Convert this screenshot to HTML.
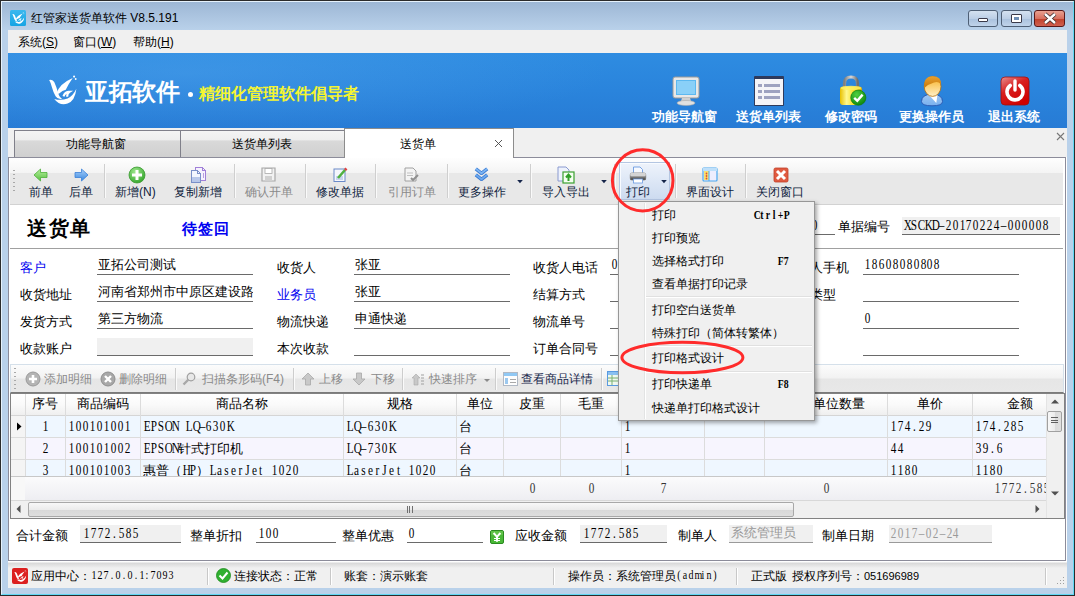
<!DOCTYPE html>
<html><head><meta charset="utf-8">
<style>
*{margin:0;padding:0;box-sizing:border-box}
html,body{width:1075px;height:596px;overflow:hidden;background:#b9d1ea}
body{position:relative;font-family:"Liberation Sans",sans-serif;font-size:12px;color:#000}
.a{position:absolute;white-space:nowrap}
.mono{font-family:"Liberation Mono",monospace}
.m{font-family:"Liberation Mono",monospace;font-size:14px;line-height:16px;transform:scaleX(0.821);transform-origin:0 0}
.s{font-family:"Liberation Serif",serif;font-size:14px;line-height:16px}
.c{display:inline-block;width:6.95px;text-align:center;transform:scaleX(0.8)}
</style></head><body>
<!-- window frame -->
<div class="a" style="left:0;top:0;width:1075px;height:596px;border:1px solid #2b2b2b;background:#b9d1ea"></div>
<div class="a" style="left:1px;top:1px;width:1073px;height:594px;border:1px solid #e6f2fc;border-right-color:#60d8f4;border-bottom-color:#60d8f4"></div>
<!-- title bar gradient -->
<div class="a" style="left:2px;top:2px;width:1071px;height:28px;background:linear-gradient(#9db7d5,#b9d1ea)"></div>
<!-- title icon -->
<svg class="a" style="left:10px;top:10px" width="16" height="16" viewBox="0 0 16 16"><defs><linearGradient id="lg1" x1="0" y1="0" x2="0" y2="1"><stop offset="0" stop-color="#3ab8ee"/><stop offset="1" stop-color="#16a4e4"/></linearGradient></defs><rect x="0" y="0" width="16" height="16" rx="1.5" fill="url(#lg1)"/><path d="M2.4 4.2 Q3.6 3.8 4.6 5 Q5.6 7 6.2 9 Q6.8 11 8 11.6 Q6.2 12 5.2 10.6 Q4.2 9 3.6 7 Q3.1 5.2 2.4 4.2Z" fill="#fff"/><path d="M5.6 9.4 Q7 5.6 12.6 3.4 Q10.6 6 9.6 8 Q8.2 8.2 6.6 9.6Z" fill="#fff"/><path d="M4.6 11.6 Q7 14.4 10.4 13.4 Q13.6 12.4 14.2 7.6 Q12.6 10.6 10.4 11.4 Q7.6 12.4 4.6 11.6Z" fill="#fff"/><path d="M8.6 10.6 Q9.2 8.8 11.2 8.8 Q10.2 9.4 10.2 10.8" fill="none" stroke="#fff" stroke-width="0.9"/><circle cx="13.2" cy="2.8" r="0.45" fill="#fff"/><circle cx="13.9" cy="3.8" r="0.4" fill="#fff"/></svg>
<div class="a" style="left:31px;top:10px;font-size:12px;line-height:16px;color:#000">红管家送货单软件 V8.5.191</div>
<!-- window buttons -->
<div class="a" style="left:968px;top:10px;width:30px;height:17px;border:1px solid #4e5f75;border-radius:3px;background:linear-gradient(#d4e1f0 0%,#bccfe6 50%,#a9c1dd 51%,#c0d3ea 100%)"></div>
<div class="a" style="left:978px;top:18px;width:10px;height:4px;border:1px solid #3a3a4a;background:#fff;border-radius:1px"></div>
<div class="a" style="left:1001px;top:10px;width:31px;height:17px;border:1px solid #4e5f75;border-radius:3px;background:linear-gradient(#d4e1f0 0%,#bccfe6 50%,#a9c1dd 51%,#c0d3ea 100%)"></div>
<div class="a" style="left:1011px;top:14px;width:11px;height:9px;border:1px solid #3a3a4a;background:#fff;border-radius:1px"></div>
<div class="a" style="left:1014px;top:17px;width:5px;height:3px;background:#6f8fb5"></div>
<div class="a" style="left:1034px;top:10px;width:31px;height:17px;border:1px solid #5a1818;border-radius:3px;background:linear-gradient(#e8a090 0%,#d87060 50%,#c0402a 51%,#d06050 100%)"></div>
<svg class="a" style="left:1042px;top:12px" width="16" height="13" viewBox="0 0 16 13"><path d="M3 2 L13 11 M13 2 L3 11" stroke="#3a2a2a" stroke-width="4"/><path d="M3 2 L13 11 M13 2 L3 11" stroke="#fff" stroke-width="2.4"/></svg>

<!-- client area -->
<div class="a" style="left:8px;top:30px;width:1059px;height:558px;background:#f0f0f0"></div>
<!-- menubar -->
<div class="a" style="left:18px;top:33px;line-height:18px;font-size:12px">系统(<u>S</u>)</div>
<div class="a" style="left:73px;top:33px;line-height:18px;font-size:12px">窗口(<u>W</u>)</div>
<div class="a" style="left:133px;top:33px;line-height:18px;font-size:12px">帮助(<u>H</u>)</div>

<!-- banner -->
<div class="a" style="left:8px;top:53px;width:1059px;height:75px;background:#2a88de"></div>

<!-- banner content -->
<div class="a" style="left:8px;top:53px;width:1059px;height:75px;background:radial-gradient(ellipse 420px 60px at 180px 20px,rgba(90,170,240,0.35),rgba(90,170,240,0) 100%),linear-gradient(#2e8ce1,#2a84dc 50%,#277bd5)"></div>
<svg class="a" style="left:48px;top:75px" width="30" height="31" viewBox="1.9 2.2 13 12.2" preserveAspectRatio="none"><path d="M2.4 4.2 Q3.6 3.8 4.6 5 Q5.6 7 6.2 9 Q6.8 11 8 11.6 Q6.2 12 5.2 10.6 Q4.2 9 3.6 7 Q3.1 5.2 2.4 4.2Z" fill="#fff"/><path d="M5.6 9.4 Q7 5.6 12.6 3.4 Q10.6 6 9.6 8 Q8.2 8.2 6.6 9.6Z" fill="#fff"/><path d="M4.6 11.6 Q7 14.4 10.4 13.4 Q13.6 12.4 14.2 7.6 Q12.6 10.6 10.4 11.4 Q7.6 12.4 4.6 11.6Z" fill="#fff"/><path d="M8.6 10.6 Q9.2 8.8 11.2 8.8 Q10.2 9.4 10.2 10.8" fill="none" stroke="#fff" stroke-width="0.9"/><circle cx="13.2" cy="2.8" r="0.45" fill="#fff"/><circle cx="13.9" cy="3.8" r="0.4" fill="#fff"/></svg>
<div class="a" style="left:85px;top:77px;font-size:24px;line-height:30px;color:#fff;font-weight:bold;letter-spacing:-0.5px">亚拓软件</div>
<div class="a" style="left:188px;top:92px;width:5px;height:5px;border-radius:50%;background:#fff"></div>
<div class="a" style="left:199px;top:83px;font-size:16px;line-height:22px;color:#f5f530;font-weight:bold">精细化管理软件倡导者</div>

<!-- banner icons -->
<svg class="a" style="left:672px;top:76px" width="28" height="30" viewBox="0 0 28 30">
<rect x="1" y="1" width="26" height="21" rx="2" fill="#e8e8e8" stroke="#9a9a9a"/>
<rect x="4" y="4" width="20" height="15" fill="#5cb8f0"/><rect x="5" y="5" width="18" height="13" fill="#8ad0f8"/>
<path d="M10 22 L18 22 L19 25 L9 25Z" fill="#d0d0d0"/><ellipse cx="14" cy="27" rx="9" ry="2.5" fill="#e0e0e0" stroke="#aaa" stroke-width="0.6"/>
</svg>
<svg class="a" style="left:753px;top:75px" width="32" height="32" viewBox="0 0 32 32">
<rect x="1" y="1" width="30" height="30" rx="1" fill="#2e3a5c"/>
<rect x="2" y="4" width="28" height="26" fill="#f4f4f8"/>
<rect x="5" y="9" width="4" height="3" fill="#9ea2c0"/><rect x="11" y="9" width="16" height="3" fill="#9ea2c0"/>
<rect x="5" y="15" width="4" height="3" fill="#9ea2c0"/><rect x="11" y="15" width="16" height="3" fill="#9ea2c0"/>
<rect x="5" y="21" width="4" height="3" fill="#9ea2c0"/><rect x="11" y="21" width="16" height="3" fill="#9ea2c0"/>
</svg>
<svg class="a" style="left:839px;top:75px" width="28" height="32" viewBox="0 0 28 32">
<defs><linearGradient id="lkb" x1="0" y1="0" x2="1" y2="0"><stop offset="0" stop-color="#e8c000"/><stop offset="0.3" stop-color="#fff890"/><stop offset="0.6" stop-color="#f8e030"/><stop offset="1" stop-color="#d8a800"/></linearGradient>
<linearGradient id="lks" x1="0" y1="0" x2="1" y2="0"><stop offset="0" stop-color="#808080"/><stop offset="0.5" stop-color="#d8d8d8"/><stop offset="1" stop-color="#707070"/></linearGradient>
<radialGradient id="lkc" cx="0.4" cy="0.3" r="0.7"><stop offset="0" stop-color="#50d040"/><stop offset="1" stop-color="#108a10"/></radialGradient></defs>
<path d="M5.5 13 L5.5 8.5 Q5.5 2 12 2 Q18.5 2 18.5 8.5 L18.5 13" fill="none" stroke="url(#lks)" stroke-width="3.2"/>
<rect x="1" y="11.5" width="22" height="18.5" rx="3" fill="url(#lkb)"/>
<ellipse cx="12" cy="13" rx="10.5" ry="2.2" fill="#fff060" opacity="0.8"/>
<circle cx="19.3" cy="22.7" r="7.6" fill="url(#lkc)" stroke="#0a7a0a" stroke-width="0.6"/>
<path d="M15.2 22.8 L18.3 25.8 L23.6 19.6" fill="none" stroke="#fff" stroke-width="2.4"/>
</svg>
<svg class="a" style="left:919px;top:74px" width="26" height="34" viewBox="0 0 26 34">
<defs><linearGradient id="ubd" x1="0" y1="0" x2="0" y2="1"><stop offset="0" stop-color="#a0c8f4"/><stop offset="1" stop-color="#78b0ee"/></linearGradient>
<linearGradient id="uhd" x1="0" y1="0" x2="0" y2="1"><stop offset="0" stop-color="#f8b020"/><stop offset="1" stop-color="#fff0c8"/></linearGradient>
<linearGradient id="uhr" x1="0" y1="0" x2="0" y2="1"><stop offset="0" stop-color="#e8a030"/><stop offset="1" stop-color="#c87808"/></linearGradient></defs>
<path d="M2.5 27.5 Q2.5 20.5 13 20 Q23.5 20.5 23.5 27.5 Q23.5 31.8 13 31.8 Q2.5 31.8 2.5 27.5Z" fill="url(#ubd)" stroke="#2a58b0" stroke-width="0.9"/>
<path d="M10 21 L18.5 20.8 L17.3 29Z" fill="#fff"/>
<ellipse cx="13.6" cy="12.4" rx="8.4" ry="10" fill="url(#uhd)" stroke="#b07010" stroke-width="0.8"/>
<path d="M5.3 14 Q4.2 2.2 13.6 2.2 Q22.6 2.2 22 10.5 Q19 6.8 15 8.6 Q9.5 10.2 5.3 14Z" fill="url(#uhr)"/>
</svg>
<svg class="a" style="left:1000px;top:76px" width="30" height="30" viewBox="0 0 30 30">
<defs><linearGradient id="pwg" x1="0" y1="0" x2="0.6" y2="1"><stop offset="0" stop-color="#e89090"/><stop offset="0.45" stop-color="#d82020"/><stop offset="1" stop-color="#d00000"/></linearGradient></defs>
<rect x="1" y="1" width="28" height="28" rx="4" fill="url(#pwg)" stroke="#a01010" stroke-width="0.8"/>
<path d="M10.2 9.5 A8 8 0 1 0 19.8 9.5" fill="none" stroke="#fff" stroke-width="3.6" stroke-linecap="round"/>
<path d="M15 5 L15 14" stroke="#fff" stroke-width="3.4" stroke-linecap="round"/>
</svg>
<div class="a" style="left:652px;top:108px;font-size:13px;line-height:17px;color:#fff;font-weight:bold">功能导航窗</div>
<div class="a" style="left:736px;top:108px;font-size:13px;line-height:17px;color:#fff;font-weight:bold">送货单列表</div>
<div class="a" style="left:825px;top:108px;font-size:13px;line-height:17px;color:#fff;font-weight:bold">修改密码</div>
<div class="a" style="left:899px;top:108px;font-size:13px;line-height:17px;color:#fff;font-weight:bold">更换操作员</div>
<div class="a" style="left:988px;top:108px;font-size:13px;line-height:17px;color:#fff;font-weight:bold">退出系统</div>

<!-- tabs -->
<div class="a" style="left:14px;top:130px;width:167px;height:28px;border:1px solid #80808a;border-bottom:none;background:linear-gradient(#f4f4f4 0%,#eeeeee 34%,#d9d9d9 36%,#cfcfcf 100%)"></div>
<div class="a" style="left:180px;top:130px;width:165px;height:28px;border:1px solid #80808a;border-bottom:none;background:linear-gradient(#f4f4f4 0%,#eeeeee 34%,#d9d9d9 36%,#cfcfcf 100%)"></div>
<div class="a" style="left:66px;top:136px;font-size:12px;line-height:16px">功能导航窗</div>
<div class="a" style="left:232px;top:136px;font-size:12px;line-height:16px">送货单列表</div>
<!-- panel -->
<div class="a" style="left:8px;top:157px;width:1058px;height:404px;border:1px solid #8c8c9a;background:#fff"></div>
<div class="a" style="left:344px;top:128px;width:170px;height:31px;border:1px solid #8c8c8c;border-bottom:none;background:#fff"></div>
<div class="a" style="left:400px;top:136px;font-size:12px;line-height:16px">送货单</div>
<svg class="a" style="left:494px;top:139px" width="9" height="9" viewBox="0 0 9 9"><path d="M1 1 L8 8 M8 1 L1 8" stroke="#444" stroke-width="0.9"/></svg>
<svg class="a" style="left:1056px;top:132px" width="9" height="9" viewBox="0 0 9 9"><path d="M1 1 L8 8 M8 1 L1 8" stroke="#777" stroke-width="1.1"/></svg>
<div class="a" style="left:1066px;top:157px;width:1px;height:404px;background:#fff"></div>
<!-- toolbar -->
<div class="a" style="left:10px;top:158px;width:1053px;height:47px;background:linear-gradient(#fefefe 0%,#f4f4f4 32%,#e8e8e8 33%,#e8e8e8 100%);border-bottom:1px solid #d2d2d2"></div>
<div class="a" style="left:13px;top:170px;width:2px;height:24px;background:repeating-linear-gradient(#a8a8a8 0 1.5px,transparent 1.5px 4px)"></div>
<div class="a" style="left:104px;top:164px;width:1px;height:34px;background:#cfcfcf;box-shadow:1px 0 0 #fafafa"></div>
<div class="a" style="left:234px;top:164px;width:1px;height:34px;background:#cfcfcf;box-shadow:1px 0 0 #fafafa"></div>
<div class="a" style="left:305px;top:164px;width:1px;height:34px;background:#cfcfcf;box-shadow:1px 0 0 #fafafa"></div>
<div class="a" style="left:375px;top:164px;width:1px;height:34px;background:#cfcfcf;box-shadow:1px 0 0 #fafafa"></div>
<div class="a" style="left:447px;top:164px;width:1px;height:34px;background:#cfcfcf;box-shadow:1px 0 0 #fafafa"></div>
<div class="a" style="left:530px;top:164px;width:1px;height:34px;background:#cfcfcf;box-shadow:1px 0 0 #fafafa"></div>
<div class="a" style="left:614px;top:164px;width:1px;height:34px;background:#cfcfcf;box-shadow:1px 0 0 #fafafa"></div>
<div class="a" style="left:675px;top:164px;width:1px;height:34px;background:#cfcfcf;box-shadow:1px 0 0 #fafafa"></div>
<div class="a" style="left:745px;top:164px;width:1px;height:34px;background:#cfcfcf;box-shadow:1px 0 0 #fafafa"></div>
<div class="a" style="left:619px;top:162px;width:51px;height:38px;border:1px solid #b4c6e2;box-shadow:inset 1px 1px 0 #f8fbff;background:linear-gradient(#eef3fb,#dde7f6 50%,#cddbf0)"></div>
<div class="a" style="left:29px;top:184px;font-size:12px;line-height:16px;color:#0e1c3c">前单</div>
<div class="a" style="left:69px;top:184px;font-size:12px;line-height:16px;color:#0e1c3c">后单</div>
<div class="a" style="left:115px;top:184px;font-size:12px;line-height:16px;color:#0e1c3c">新增(N)</div>
<div class="a" style="left:174px;top:184px;font-size:12px;line-height:16px;color:#0e1c3c">复制新增</div>
<div class="a" style="left:245px;top:184px;font-size:12px;line-height:16px;color:#8a8a8a">确认开单</div>
<div class="a" style="left:316px;top:184px;font-size:12px;line-height:16px;color:#0e1c3c">修改单据</div>
<div class="a" style="left:388px;top:184px;font-size:12px;line-height:16px;color:#8a8a8a">引用订单</div>
<div class="a" style="left:458px;top:184px;font-size:12px;line-height:16px;color:#0e1c3c">更多操作</div>
<div class="a" style="left:542px;top:184px;font-size:12px;line-height:16px;color:#0e1c3c">导入导出</div>
<div class="a" style="left:626px;top:184px;font-size:12px;line-height:16px;color:#0e1c3c">打印</div>
<div class="a" style="left:686px;top:184px;font-size:12px;line-height:16px;color:#0e1c3c">界面设计</div>
<div class="a" style="left:756px;top:184px;font-size:12px;line-height:16px;color:#0e1c3c">关闭窗口</div>
<svg class="a" style="left:516.5px;top:180px" width="6" height="4" viewBox="0 0 6 4"><path d="M0.2 0 L5.8 0 L3 3.2Z" fill="#15254a"/></svg>
<svg class="a" style="left:600.5px;top:180px" width="6" height="4" viewBox="0 0 6 4"><path d="M0.2 0 L5.8 0 L3 3.2Z" fill="#15254a"/></svg>
<svg class="a" style="left:660.5px;top:180px" width="6" height="4" viewBox="0 0 6 4"><path d="M0.2 0 L5.8 0 L3 3.2Z" fill="#15254a"/></svg>

<!-- toolbar icons -->
<svg class="a" style="left:33px;top:168px" width="15" height="14" viewBox="0 0 15 14"><defs><linearGradient id="gg" x1="0" y1="0" x2="0" y2="1"><stop offset="0" stop-color="#b8f0a0"/><stop offset="1" stop-color="#58c040"/></linearGradient></defs><path d="M1 7 L7.5 1 L7.5 4.5 L14 4.5 L14 9.5 L7.5 9.5 L7.5 13Z" fill="url(#gg)" stroke="#4cb038" stroke-width="0.8"/></svg>
<svg class="a" style="left:74px;top:168px" width="15" height="14" viewBox="0 0 15 14"><defs><linearGradient id="bg" x1="0" y1="0" x2="0" y2="1"><stop offset="0" stop-color="#a8d0fa"/><stop offset="1" stop-color="#3a88e0"/></linearGradient></defs><path d="M14 7 L7.5 1 L7.5 4.5 L1 4.5 L1 9.5 L7.5 9.5 L7.5 13Z" fill="url(#bg)" stroke="#3a80d8" stroke-width="0.8"/></svg>
<svg class="a" style="left:128px;top:166px" width="18" height="18" viewBox="0 0 18 18"><defs><radialGradient id="gc" cx="0.4" cy="0.3" r="0.7"><stop offset="0" stop-color="#a0e890"/><stop offset="1" stop-color="#38a830"/></radialGradient></defs><circle cx="9" cy="9" r="8" fill="url(#gc)" stroke="#3a9a30" stroke-width="0.8"/><path d="M9 4 L9 14 M4 9 L14 9" stroke="#fff" stroke-width="3"/></svg>
<svg class="a" style="left:190px;top:167px" width="16" height="16" viewBox="0 0 16 16" shape-rendering="crispEdges"><path d="M5.5 0.5 H12.5 L15.5 3.5 V13.5 H5.5Z" fill="#f6f2fe" stroke="#a080d8"/><path d="M12.5 0.5 V3.5 H15.5" fill="none" stroke="#a080d8"/><path d="M13 6 V11" stroke="#b8a0e0"/><path d="M1.5 3.5 H7.5 L10.5 6.5 V15.5 H1.5Z" fill="#f2f6fe" stroke="#7a90c8"/><path d="M7.5 3.5 V6.5 H10.5" fill="none" stroke="#7a90c8"/><rect x="2" y="10" width="8" height="5" fill="#b8c8ea"/></svg>
<svg class="a" style="left:261px;top:167px" width="15" height="15" viewBox="0 0 15 15"><path d="M1 1 L14 1 L14 14 L1 14Z" fill="#f2f2f2" stroke="#a8a8a8" stroke-width="1.2"/><rect x="4" y="1.5" width="7" height="5" fill="#fff" stroke="#a8a8a8" stroke-width="0.8"/><rect x="4" y="9" width="7" height="5" fill="#d0d0d0"/></svg>
<svg class="a" style="left:333px;top:167px" width="15" height="15" viewBox="0 0 15 15"><rect x="1" y="2" width="11" height="12.5" fill="#f4f6fc" stroke="#6a8ac8" stroke-width="1"/><rect x="3" y="9" width="7" height="4" fill="#c8d4ee"/><path d="M5 11 L12 3" stroke="#50b040" stroke-width="2.6"/><path d="M12 3 L13.5 1.5" stroke="#e04040" stroke-width="2.6"/></svg>
<svg class="a" style="left:404px;top:167px" width="15" height="15" viewBox="0 0 15 15"><path d="M1 1 L9 1 L12 4 L12 14 L1 14Z" fill="#f4f4f4" stroke="#a0a0a0" stroke-width="1"/><path d="M3 6 L9 6 M3 8.5 L9 8.5" stroke="#c0c0c0"/><path d="M7 11 L9 13 L14 8" fill="none" stroke="#909090" stroke-width="2"/></svg>
<svg class="a" style="left:474px;top:167px" width="15" height="15" viewBox="0 0 15 15"><path d="M1.8 1.8 L7.5 6.3 L13.2 1.8" fill="none" stroke="#3a78d0" stroke-width="3.4" stroke-linejoin="round"/><path d="M1.8 1.8 L7.5 6.3 L13.2 1.8" fill="none" stroke="#7ab4f4" stroke-width="1.8"/><path d="M1.8 7.8 L7.5 12.3 L13.2 7.8" fill="none" stroke="#3a78d0" stroke-width="3.4" stroke-linejoin="round"/><path d="M1.8 7.8 L7.5 12.3 L13.2 7.8" fill="none" stroke="#6aa8ee" stroke-width="1.8"/></svg>
<svg class="a" style="left:557px;top:166px" width="18" height="18" viewBox="0 0 18 18"><path d="M1 1 L9 1 L12 4 L12 15 L1 15Z" fill="#eef2fc" stroke="#8a9ad0" stroke-width="1"/><rect x="6" y="6" width="11" height="11" fill="#f4fff0" stroke="#3aa030" stroke-width="1.2"/><path d="M11.5 15 L11.5 10 M9 11.5 L11.5 8.5 L14 11.5" fill="none" stroke="#30a028" stroke-width="2"/></svg>
<svg class="a" style="left:629px;top:166px" width="18" height="18" viewBox="0 0 18 18"><path d="M4.5 1 L11 1 L13.5 3.5 L13.5 8 L4.5 8Z" fill="#f6f9ff" stroke="#6a9ae0" stroke-width="0.9"/><rect x="0.8" y="6.5" width="16.4" height="8" rx="2.5" fill="#8c8c8c"/><rect x="1.2" y="6.8" width="15.6" height="3.5" rx="1.5" fill="#d4d4d4"/><rect x="1.5" y="11.5" width="15" height="2.5" fill="#5a5a5a"/><rect x="4.5" y="13" width="9" height="4" fill="#fff" stroke="#6a9ae0" stroke-width="0.8"/></svg>
<svg class="a" style="left:702px;top:167px" width="16" height="15" viewBox="0 0 16 15"><rect x="1" y="1" width="14" height="13" rx="1" fill="#eeeefe" stroke="#4aa8f0" stroke-width="1.2"/><rect x="2" y="4" width="5" height="9" fill="#f8e070"/><rect x="1" y="1" width="14" height="3" fill="#bfe0fa"/><circle cx="4.5" cy="6.5" r="0.9" fill="#e05030"/><circle cx="4.5" cy="9" r="0.9" fill="#e05030"/><circle cx="4.5" cy="11.5" r="0.9" fill="#e05030"/><path d="M7 4 L7 14" stroke="#4aa8f0"/></svg>
<svg class="a" style="left:773px;top:167px" width="16" height="16" viewBox="0 0 16 16"><rect x="1" y="1" width="14" height="14" rx="1.5" fill="#e05a40" stroke="#c04028" stroke-width="0.8"/><path d="M4 4 L12 12 M12 4 L4 12" stroke="#fff" stroke-width="3"/></svg>

<!-- header -->
<div class="a" style="left:27px;top:215px;font-size:20px;line-height:26px;font-weight:bold;color:#000;letter-spacing:1.5px">送货单</div>
<div class="a" style="left:182px;top:219px;font-size:15px;line-height:20px;font-weight:bold;color:#0000f0;letter-spacing:1px">待签回</div>
<div class="a" style="left:745px;top:234px;width:90px;height:1px;background:#6a6a6a"></div>
<div class="a s" style="left:811.0px;top:218px;color:#000;"><span class="c">0</span></div>
<div class="a" style="left:838.0px;top:218px;font-size:13px;line-height:17px;color:#000;">单据编号</div>
<div class="a" style="left:902px;top:217px;width:158px;height:18px;background:#f0f0f0;border-bottom:1px solid #6a6a6a"></div>
<div class="a s" style="left:903.0px;top:218px;color:#000;"><span class="c">X</span><span class="c">S</span><span class="c">C</span><span class="c">K</span><span class="c">D</span><span class="c">&#8211;</span><span class="c">2</span><span class="c">0</span><span class="c">1</span><span class="c">7</span><span class="c">0</span><span class="c">2</span><span class="c">2</span><span class="c">4</span><span class="c">&#8211;</span><span class="c">0</span><span class="c">0</span><span class="c">0</span><span class="c">0</span><span class="c">0</span><span class="c">8</span></div>
<div class="a" style="left:10px;top:248px;width:1053px;height:1px;background:#a0a0a0"></div>
<div class="a" style="left:20px;top:259px;font-size:13px;line-height:17px;color:#0000f0">客户</div>
<div class="a" style="left:97px;top:274px;width:156px;height:1px;background:#6a6a6a"></div>
<div class="a" style="left:97px;top:254px;width:156px;height:20px;overflow:hidden"><div class="a" style="left:-97px;top:-254px;width:1075px;height:596px"><div class="a" style="left:98.0px;top:256px;font-size:13px;line-height:17px;color:#000;">亚拓公司测试</div></div></div>
<div class="a" style="left:277px;top:259px;font-size:13px;line-height:17px;color:#000">收货人</div>
<div class="a" style="left:354px;top:274px;width:156px;height:1px;background:#6a6a6a"></div>
<div class="a" style="left:354px;top:254px;width:156px;height:20px;overflow:hidden"><div class="a" style="left:-354px;top:-254px;width:1075px;height:596px"><div class="a" style="left:355.0px;top:256px;font-size:13px;line-height:17px;color:#000;">张亚</div></div></div>
<div class="a" style="left:533px;top:259px;font-size:13px;line-height:17px;color:#000">收货人电话</div>
<div class="a" style="left:610px;top:274px;width:160px;height:1px;background:#6a6a6a"></div>
<div class="a" style="left:610px;top:254px;width:160px;height:20px;overflow:hidden"><div class="a" style="left:-610px;top:-254px;width:1075px;height:596px"><div class="a s" style="left:611.0px;top:257px;color:#000;"><span class="c">0</span><span class="c">3</span><span class="c">7</span><span class="c">1</span><span class="c">&#8211;</span><span class="c">6</span><span class="c">6</span><span class="c">6</span><span class="c">6</span><span class="c">8</span><span class="c">8</span><span class="c">8</span><span class="c">8</span></div></div></div>
<div class="a" style="left:784px;top:259px;font-size:13px;line-height:17px;color:#000">收货人手机</div>
<div class="a" style="left:863px;top:274px;width:156px;height:1px;background:#6a6a6a"></div>
<div class="a" style="left:863px;top:254px;width:156px;height:20px;overflow:hidden"><div class="a" style="left:-863px;top:-254px;width:1075px;height:596px"><div class="a s" style="left:864.0px;top:257px;color:#000;"><span class="c">1</span><span class="c">8</span><span class="c">6</span><span class="c">0</span><span class="c">8</span><span class="c">0</span><span class="c">8</span><span class="c">0</span><span class="c">8</span><span class="c">0</span><span class="c">8</span></div></div></div>
<div class="a" style="left:20px;top:286px;font-size:13px;line-height:17px;color:#000">收货地址</div>
<div class="a" style="left:97px;top:301px;width:156px;height:1px;background:#6a6a6a"></div>
<div class="a" style="left:97px;top:281px;width:156px;height:20px;overflow:hidden"><div class="a" style="left:-97px;top:-281px;width:1075px;height:596px"><div class="a" style="left:98.0px;top:283px;font-size:13px;line-height:17px;color:#000;">河南省郑州市中原区建设路</div></div></div>
<div class="a" style="left:277px;top:286px;font-size:13px;line-height:17px;color:#0000f0">业务员</div>
<div class="a" style="left:354px;top:301px;width:156px;height:1px;background:#6a6a6a"></div>
<div class="a" style="left:354px;top:281px;width:156px;height:20px;overflow:hidden"><div class="a" style="left:-354px;top:-281px;width:1075px;height:596px"><div class="a" style="left:355.0px;top:283px;font-size:13px;line-height:17px;color:#000;">张亚</div></div></div>
<div class="a" style="left:533px;top:286px;font-size:13px;line-height:17px;color:#000">结算方式</div>
<div class="a" style="left:610px;top:301px;width:160px;height:1px;background:#6a6a6a"></div>
<div class="a" style="left:784px;top:286px;font-size:13px;line-height:17px;color:#000">收款类型</div>
<div class="a" style="left:863px;top:301px;width:156px;height:1px;background:#6a6a6a"></div>
<div class="a" style="left:20px;top:313px;font-size:13px;line-height:17px;color:#000">发货方式</div>
<div class="a" style="left:97px;top:328px;width:156px;height:1px;background:#6a6a6a"></div>
<div class="a" style="left:97px;top:308px;width:156px;height:20px;overflow:hidden"><div class="a" style="left:-97px;top:-308px;width:1075px;height:596px"><div class="a" style="left:98.0px;top:310px;font-size:13px;line-height:17px;color:#000;">第三方物流</div></div></div>
<div class="a" style="left:277px;top:313px;font-size:13px;line-height:17px;color:#000">物流快递</div>
<div class="a" style="left:354px;top:328px;width:156px;height:1px;background:#6a6a6a"></div>
<div class="a" style="left:354px;top:308px;width:156px;height:20px;overflow:hidden"><div class="a" style="left:-354px;top:-308px;width:1075px;height:596px"><div class="a" style="left:355.0px;top:310px;font-size:13px;line-height:17px;color:#000;">申通快递</div></div></div>
<div class="a" style="left:533px;top:313px;font-size:13px;line-height:17px;color:#000">物流单号</div>
<div class="a" style="left:610px;top:328px;width:160px;height:1px;background:#6a6a6a"></div>
<div class="a" style="left:784px;top:313px;font-size:13px;line-height:17px;color:#000">运费</div>
<div class="a" style="left:863px;top:328px;width:156px;height:1px;background:#6a6a6a"></div>
<div class="a" style="left:863px;top:308px;width:156px;height:20px;overflow:hidden"><div class="a" style="left:-863px;top:-308px;width:1075px;height:596px"><div class="a s" style="left:864.0px;top:311px;color:#000;"><span class="c">0</span></div></div></div>
<div class="a" style="left:20px;top:340px;font-size:13px;line-height:17px;color:#000">收款账户</div>
<div class="a" style="left:97px;top:338px;width:156px;height:18px;background:#f0f0f0;border-bottom:1px solid #6a6a6a"></div>
<div class="a" style="left:277px;top:340px;font-size:13px;line-height:17px;color:#000">本次收款</div>
<div class="a" style="left:354px;top:355px;width:156px;height:1px;background:#6a6a6a"></div>
<div class="a" style="left:533px;top:340px;font-size:13px;line-height:17px;color:#000">订单合同号</div>
<div class="a" style="left:610px;top:355px;width:160px;height:1px;background:#6a6a6a"></div>
<div class="a" style="left:784px;top:340px;font-size:13px;line-height:17px;color:#000">备注</div>
<div class="a" style="left:863px;top:355px;width:156px;height:1px;background:#6a6a6a"></div>
<!-- detail toolbar -->
<div class="a" style="left:10px;top:364px;width:1054px;height:29px;border:1px solid #d5e0ea;border-bottom:1px solid #7a7a7a;background:linear-gradient(#fcfcfc 0%,#f2f2f2 48%,#e6e6e6 52%,#e8e8e8 100%)"></div>
<div class="a" style="left:14px;top:368px;width:2px;height:22px;background:repeating-linear-gradient(#a8a8a8 0 1.5px,transparent 1.5px 4px)"></div>
<svg class="a" style="left:25px;top:371px" width="16" height="16" viewBox="0 0 16 16"><circle cx="8" cy="8" r="7" fill="#b4b4b4" stroke="#9a9a9a"/><path d="M8 4 L8 12 M4 8 L12 8" stroke="#fff" stroke-width="2.6"/></svg>
<div class="a" style="left:44px;top:371px;font-size:12px;line-height:16px;color:#8a8a8a">添加明细</div>
<svg class="a" style="left:100px;top:371px" width="16" height="16" viewBox="0 0 16 16"><circle cx="8" cy="8" r="7" fill="#a8a8a8" stroke="#8e8e8e"/><path d="M5 5 L11 11 M11 5 L5 11" stroke="#fff" stroke-width="2.4"/></svg>
<div class="a" style="left:119px;top:371px;font-size:12px;line-height:16px;color:#8a8a8a">删除明细</div>
<svg class="a" style="left:182px;top:372px" width="14" height="14" viewBox="0 0 14 14"><circle cx="9" cy="5" r="3.8" fill="#e8e8e8" stroke="#a0a0a0" stroke-width="1.2"/><path d="M6.5 7.5 L1.5 12.5" stroke="#a8a8a8" stroke-width="2.4"/></svg>
<div class="a" style="left:202px;top:371px;font-size:12px;line-height:16px;color:#8a8a8a">扫描条形码(F4)</div>
<svg class="a" style="left:301px;top:372px" width="14" height="14" viewBox="0 0 14 14"><path d="M7 1 L13 7 L9.5 7 L9.5 13 L4.5 13 L4.5 7 L1 7Z" fill="#c8c8c8" stroke="#a8a8a8" stroke-width="0.8"/></svg>
<div class="a" style="left:319px;top:371px;font-size:12px;line-height:16px;color:#8a8a8a">上移</div>
<svg class="a" style="left:352px;top:372px" width="14" height="14" viewBox="0 0 14 14"><path d="M7 13 L13 7 L9.5 7 L9.5 1 L4.5 1 L4.5 7 L1 7Z" fill="#c8c8c8" stroke="#a8a8a8" stroke-width="0.8"/></svg>
<div class="a" style="left:371px;top:371px;font-size:12px;line-height:16px;color:#8a8a8a">下移</div>
<svg class="a" style="left:411px;top:372px" width="14" height="14" viewBox="0 0 14 14"><path d="M5 2 L9 6 L7 6 L7 13 L3 13 L3 6 L1 6Z" fill="#c8c8c8" stroke="#a8a8a8" stroke-width="0.6"/><path d="M10 3 L13 3 M10 6 L13 6 M10 9 L13 9 M10 12 L13 12" stroke="#a0a0a0" stroke-width="1.2"/></svg>
<div class="a" style="left:429px;top:371px;font-size:12px;line-height:16px;color:#8a8a8a">快速排序</div>
<div class="a" style="left:484px;top:379px;width:0;height:0;border-left:3px solid transparent;border-right:3px solid transparent;border-top:3px solid #8a8a8a"></div>
<svg class="a" style="left:503px;top:372px" width="15" height="14" viewBox="0 0 15 14" shape-rendering="crispEdges"><rect x="0.5" y="0.5" width="14" height="13" fill="#fdfdfd" stroke="#b0b8c4"/><rect x="1" y="1" width="13" height="3" fill="#90c8f4"/><rect x="2" y="6" width="3" height="6" fill="#9cc8ee"/><path d="M7 7.5 H13 M7 10.5 H13" stroke="#a8a8a8"/></svg>
<div class="a" style="left:521px;top:371px;font-size:12px;line-height:16px;color:#15254a">查看商品详情</div>
<svg class="a" style="left:607px;top:371px" width="14" height="15" viewBox="0 0 14 15"><rect x="0.5" y="0.5" width="14" height="14" fill="#f0f8f0" stroke="#5a9ae0"/><rect x="1" y="1" width="13" height="3" fill="#8ac0f0"/><path d="M1 7 L14 7 M1 10 L14 10 M5 4 L5 14" stroke="#7ab070"/></svg>
<div class="a" style="left:175px;top:368px;width:1px;height:22px;background:#cdcdcd;box-shadow:1px 0 0 #fafafa"></div>
<div class="a" style="left:293px;top:368px;width:1px;height:22px;background:#cdcdcd;box-shadow:1px 0 0 #fafafa"></div>
<div class="a" style="left:402px;top:368px;width:1px;height:22px;background:#cdcdcd;box-shadow:1px 0 0 #fafafa"></div>
<div class="a" style="left:495px;top:368px;width:1px;height:22px;background:#cdcdcd;box-shadow:1px 0 0 #fafafa"></div>
<div class="a" style="left:601px;top:368px;width:1px;height:22px;background:#cdcdcd;box-shadow:1px 0 0 #fafafa"></div>
<!-- grid -->
<div class="a" style="left:10px;top:393px;width:1055px;height:126px;border:1px solid #828282;background:#fff"></div>
<div class="a" style="left:11px;top:394px;width:1035px;height:22px;background:linear-gradient(#ffffff 0%,#fafafa 50%,#efefef 100%);border-bottom:1px solid #d5d5d5"></div>
<div class="a" style="left:25px;top:394px;width:1px;height:82px;background:#dcdcdc"></div>
<div class="a" style="left:25px;top:395px;width:40px;text-align:center;font-size:13px;line-height:17px">序号</div>
<div class="a" style="left:65px;top:394px;width:1px;height:82px;background:#dcdcdc"></div>
<div class="a" style="left:65px;top:395px;width:75px;text-align:center;font-size:13px;line-height:17px">商品编码</div>
<div class="a" style="left:140px;top:394px;width:1px;height:82px;background:#dcdcdc"></div>
<div class="a" style="left:140px;top:395px;width:203px;text-align:center;font-size:13px;line-height:17px">商品名称</div>
<div class="a" style="left:343px;top:394px;width:1px;height:82px;background:#dcdcdc"></div>
<div class="a" style="left:343px;top:395px;width:113px;text-align:center;font-size:13px;line-height:17px">规格</div>
<div class="a" style="left:456px;top:394px;width:1px;height:82px;background:#dcdcdc"></div>
<div class="a" style="left:456px;top:395px;width:47px;text-align:center;font-size:13px;line-height:17px">单位</div>
<div class="a" style="left:503px;top:394px;width:1px;height:82px;background:#dcdcdc"></div>
<div class="a" style="left:503px;top:395px;width:57px;text-align:center;font-size:13px;line-height:17px">皮重</div>
<div class="a" style="left:560px;top:394px;width:1px;height:82px;background:#dcdcdc"></div>
<div class="a" style="left:560px;top:395px;width:61px;text-align:center;font-size:13px;line-height:17px">毛重</div>
<div class="a" style="left:621px;top:394px;width:1px;height:82px;background:#dcdcdc"></div>
<div class="a" style="left:621px;top:395px;width:83px;text-align:center;font-size:13px;line-height:17px">数量</div>
<div class="a" style="left:704px;top:394px;width:1px;height:82px;background:#dcdcdc"></div>
<div class="a" style="left:704px;top:395px;width:60px;text-align:center;font-size:13px;line-height:17px">辅助数量</div>
<div class="a" style="left:764px;top:394px;width:1px;height:82px;background:#dcdcdc"></div>
<div class="a" style="left:764px;top:395px;width:123px;text-align:center;font-size:13px;line-height:17px">基本单位数量</div>
<div class="a" style="left:887px;top:394px;width:1px;height:82px;background:#dcdcdc"></div>
<div class="a" style="left:887px;top:395px;width:85px;text-align:center;font-size:13px;line-height:17px">单价</div>
<div class="a" style="left:972px;top:394px;width:1px;height:82px;background:#dcdcdc"></div>
<div class="a" style="left:972px;top:395px;width:95px;text-align:center;font-size:13px;line-height:17px">金额</div>
<div class="a" style="left:11px;top:416px;width:14px;height:22px;background:#f4f4f4"></div>
<div class="a" style="left:26px;top:416px;width:1020px;height:22px;background:#eff7ff"></div>
<div class="a" style="left:11px;top:437px;width:1035px;height:1px;background:#dcdcdc"></div>
<div class="a" style="left:26px;top:416px;width:39px;height:21px;overflow:hidden"><div class="a" style="left:-26px;top:-416px;width:1075px;height:596px"><div class="a s" style="left:41.5px;top:419px;color:#000;"><span class="c">1</span></div></div></div>
<div class="a" style="left:66px;top:416px;width:74px;height:21px;overflow:hidden"><div class="a" style="left:-66px;top:-416px;width:1075px;height:596px"><div class="a s" style="left:68.0px;top:419px;color:#000;"><span class="c">1</span><span class="c">0</span><span class="c">0</span><span class="c">1</span><span class="c">0</span><span class="c">1</span><span class="c">0</span><span class="c">0</span><span class="c">1</span></div></div></div>
<div class="a" style="left:141px;top:416px;width:202px;height:21px;overflow:hidden"><div class="a" style="left:-141px;top:-416px;width:1075px;height:596px"><div class="a s" style="left:143.0px;top:419px;color:#000;"><span class="c">E</span><span class="c">P</span><span class="c">S</span><span class="c">O</span><span class="c">N</span><span class="c">&nbsp;</span><span class="c">L</span><span class="c">Q</span><span class="c">&#8211;</span><span class="c">6</span><span class="c">3</span><span class="c">0</span><span class="c">K</span></div></div></div>
<div class="a" style="left:344px;top:416px;width:112px;height:21px;overflow:hidden"><div class="a" style="left:-344px;top:-416px;width:1075px;height:596px"><div class="a s" style="left:346.0px;top:419px;color:#000;"><span class="c">L</span><span class="c">Q</span><span class="c">&#8211;</span><span class="c">6</span><span class="c">3</span><span class="c">0</span><span class="c">K</span></div></div></div>
<div class="a" style="left:457px;top:416px;width:46px;height:21px;overflow:hidden"><div class="a" style="left:-457px;top:-416px;width:1075px;height:596px"><div class="a" style="left:459.0px;top:418px;font-size:13px;line-height:17px;color:#000;">台</div></div></div>
<div class="a" style="left:622px;top:416px;width:82px;height:21px;overflow:hidden"><div class="a" style="left:-622px;top:-416px;width:1075px;height:596px"><div class="a s" style="left:624.0px;top:419px;color:#000;"><span class="c">1</span></div></div></div>
<div class="a" style="left:888px;top:416px;width:84px;height:21px;overflow:hidden"><div class="a" style="left:-888px;top:-416px;width:1075px;height:596px"><div class="a s" style="left:890.0px;top:419px;color:#000;"><span class="c">1</span><span class="c">7</span><span class="c">4</span><span class="c">.</span><span class="c">2</span><span class="c">9</span></div></div></div>
<div class="a" style="left:973px;top:416px;width:73px;height:21px;overflow:hidden"><div class="a" style="left:-973px;top:-416px;width:1075px;height:596px"><div class="a s" style="left:975.0px;top:419px;color:#000;"><span class="c">1</span><span class="c">7</span><span class="c">4</span><span class="c">.</span><span class="c">2</span><span class="c">8</span><span class="c">5</span></div></div></div>
<div class="a" style="left:11px;top:438px;width:14px;height:22px;background:#f4f4f4"></div>
<div class="a" style="left:26px;top:438px;width:1020px;height:22px;background:#f7f5fe"></div>
<div class="a" style="left:11px;top:459px;width:1035px;height:1px;background:#dcdcdc"></div>
<div class="a" style="left:26px;top:438px;width:39px;height:21px;overflow:hidden"><div class="a" style="left:-26px;top:-438px;width:1075px;height:596px"><div class="a s" style="left:41.5px;top:441px;color:#000;"><span class="c">2</span></div></div></div>
<div class="a" style="left:66px;top:438px;width:74px;height:21px;overflow:hidden"><div class="a" style="left:-66px;top:-438px;width:1075px;height:596px"><div class="a s" style="left:68.0px;top:441px;color:#000;"><span class="c">1</span><span class="c">0</span><span class="c">0</span><span class="c">1</span><span class="c">0</span><span class="c">1</span><span class="c">0</span><span class="c">0</span><span class="c">2</span></div></div></div>
<div class="a" style="left:141px;top:438px;width:202px;height:21px;overflow:hidden"><div class="a" style="left:-141px;top:-438px;width:1075px;height:596px"><div class="a s" style="left:143.0px;top:441px;color:#000;"><span class="c">E</span><span class="c">P</span><span class="c">S</span><span class="c">O</span><span class="c">N</span></div><div class="a" style="left:177.8px;top:440px;font-size:13px;line-height:17px;color:#000;">针式打印机</div></div></div>
<div class="a" style="left:344px;top:438px;width:112px;height:21px;overflow:hidden"><div class="a" style="left:-344px;top:-438px;width:1075px;height:596px"><div class="a s" style="left:346.0px;top:441px;color:#000;"><span class="c">L</span><span class="c">Q</span><span class="c">&#8211;</span><span class="c">7</span><span class="c">3</span><span class="c">0</span><span class="c">K</span></div></div></div>
<div class="a" style="left:457px;top:438px;width:46px;height:21px;overflow:hidden"><div class="a" style="left:-457px;top:-438px;width:1075px;height:596px"><div class="a" style="left:459.0px;top:440px;font-size:13px;line-height:17px;color:#000;">台</div></div></div>
<div class="a" style="left:622px;top:438px;width:82px;height:21px;overflow:hidden"><div class="a" style="left:-622px;top:-438px;width:1075px;height:596px"><div class="a s" style="left:624.0px;top:441px;color:#000;"><span class="c">1</span></div></div></div>
<div class="a" style="left:888px;top:438px;width:84px;height:21px;overflow:hidden"><div class="a" style="left:-888px;top:-438px;width:1075px;height:596px"><div class="a s" style="left:890.0px;top:441px;color:#000;"><span class="c">4</span><span class="c">4</span></div></div></div>
<div class="a" style="left:973px;top:438px;width:73px;height:21px;overflow:hidden"><div class="a" style="left:-973px;top:-438px;width:1075px;height:596px"><div class="a s" style="left:975.0px;top:441px;color:#000;"><span class="c">3</span><span class="c">9</span><span class="c">.</span><span class="c">6</span></div></div></div>
<div class="a" style="left:11px;top:460px;width:14px;height:16px;background:#f4f4f4"></div>
<div class="a" style="left:26px;top:460px;width:1020px;height:16px;background:#eff7ff"></div>
<div class="a" style="left:26px;top:460px;width:39px;height:16px;overflow:hidden"><div class="a" style="left:-26px;top:-460px;width:1075px;height:596px"><div class="a s" style="left:41.5px;top:463px;color:#000;"><span class="c">3</span></div></div></div>
<div class="a" style="left:66px;top:460px;width:74px;height:16px;overflow:hidden"><div class="a" style="left:-66px;top:-460px;width:1075px;height:596px"><div class="a s" style="left:68.0px;top:463px;color:#000;"><span class="c">1</span><span class="c">0</span><span class="c">0</span><span class="c">1</span><span class="c">0</span><span class="c">1</span><span class="c">0</span><span class="c">0</span><span class="c">3</span></div></div></div>
<div class="a" style="left:141px;top:460px;width:202px;height:16px;overflow:hidden"><div class="a" style="left:-141px;top:-460px;width:1075px;height:596px"><div class="a" style="left:143.0px;top:462px;font-size:13px;line-height:17px;color:#000;">惠普（</div><div class="a s" style="left:182.0px;top:463px;color:#000;"><span class="c">H</span><span class="c">P</span></div><div class="a" style="left:195.9px;top:462px;font-size:13px;line-height:17px;color:#000;">）</div><div class="a s" style="left:208.9px;top:463px;color:#000;"><span class="c">L</span><span class="c">a</span><span class="c">s</span><span class="c">e</span><span class="c">r</span><span class="c">J</span><span class="c">e</span><span class="c">t</span><span class="c">&nbsp;</span><span class="c">1</span><span class="c">0</span><span class="c">2</span><span class="c">0</span></div></div></div>
<div class="a" style="left:344px;top:460px;width:112px;height:16px;overflow:hidden"><div class="a" style="left:-344px;top:-460px;width:1075px;height:596px"><div class="a s" style="left:346.0px;top:463px;color:#000;"><span class="c">L</span><span class="c">a</span><span class="c">s</span><span class="c">e</span><span class="c">r</span><span class="c">J</span><span class="c">e</span><span class="c">t</span><span class="c">&nbsp;</span><span class="c">1</span><span class="c">0</span><span class="c">2</span><span class="c">0</span></div></div></div>
<div class="a" style="left:457px;top:460px;width:46px;height:16px;overflow:hidden"><div class="a" style="left:-457px;top:-460px;width:1075px;height:596px"><div class="a" style="left:459.0px;top:462px;font-size:13px;line-height:17px;color:#000;">台</div></div></div>
<div class="a" style="left:622px;top:460px;width:82px;height:16px;overflow:hidden"><div class="a" style="left:-622px;top:-460px;width:1075px;height:596px"><div class="a s" style="left:624.0px;top:463px;color:#000;"><span class="c">1</span></div></div></div>
<div class="a" style="left:888px;top:460px;width:84px;height:16px;overflow:hidden"><div class="a" style="left:-888px;top:-460px;width:1075px;height:596px"><div class="a s" style="left:890.0px;top:463px;color:#000;"><span class="c">1</span><span class="c">1</span><span class="c">8</span><span class="c">0</span></div></div></div>
<div class="a" style="left:973px;top:460px;width:73px;height:16px;overflow:hidden"><div class="a" style="left:-973px;top:-460px;width:1075px;height:596px"><div class="a s" style="left:975.0px;top:463px;color:#000;"><span class="c">1</span><span class="c">1</span><span class="c">8</span><span class="c">0</span></div></div></div>
<div class="a" style="left:25px;top:416px;width:1px;height:60px;background:#dcdcdc"></div>
<div class="a" style="left:65px;top:416px;width:1px;height:60px;background:#dcdcdc"></div>
<div class="a" style="left:140px;top:416px;width:1px;height:60px;background:#dcdcdc"></div>
<div class="a" style="left:343px;top:416px;width:1px;height:60px;background:#dcdcdc"></div>
<div class="a" style="left:456px;top:416px;width:1px;height:60px;background:#dcdcdc"></div>
<div class="a" style="left:503px;top:416px;width:1px;height:60px;background:#dcdcdc"></div>
<div class="a" style="left:560px;top:416px;width:1px;height:60px;background:#dcdcdc"></div>
<div class="a" style="left:621px;top:416px;width:1px;height:60px;background:#dcdcdc"></div>
<div class="a" style="left:704px;top:416px;width:1px;height:60px;background:#dcdcdc"></div>
<div class="a" style="left:764px;top:416px;width:1px;height:60px;background:#dcdcdc"></div>
<div class="a" style="left:887px;top:416px;width:1px;height:60px;background:#dcdcdc"></div>
<div class="a" style="left:972px;top:416px;width:1px;height:60px;background:#dcdcdc"></div>
<svg class="a" style="left:16px;top:422px" width="6" height="9" viewBox="0 0 6 9"><path d="M1 0.5 L5.5 4.5 L1 8.5Z" fill="#000"/></svg>
<div class="a" style="left:11px;top:476px;width:1035px;height:24px;background:linear-gradient(#fbfbfc,#eeeef2);border-top:1px solid #c8c8c8"></div>
<div class="a" style="left:11px;top:477px;width:14px;height:24px;background:#f8f8f8"></div>
<div class="a s" style="left:528.5px;top:481px;color:#333;"><span class="c">0</span></div>
<div class="a s" style="left:587.5px;top:481px;color:#333;"><span class="c">0</span></div>
<div class="a s" style="left:659.5px;top:481px;color:#333;"><span class="c">7</span></div>
<div class="a s" style="left:822.5px;top:481px;color:#333;"><span class="c">0</span></div>
<div class="a" style="left:972px;top:476px;width:74px;height:24px;overflow:hidden"><div class="a" style="left:-972px;top:-476px;width:1075px;height:596px"><div class="a s" style="left:994.0px;top:481px;color:#333;"><span class="c">1</span><span class="c">7</span><span class="c">7</span><span class="c">2</span><span class="c">.</span><span class="c">5</span><span class="c">8</span><span class="c">5</span></div></div></div>
<div class="a" style="left:11px;top:500px;width:1035px;height:18px;background:#f0f0f0;border-top:1px solid #d8d8d8"></div>
<svg class="a" style="left:16px;top:505px" width="5" height="8" viewBox="0 0 5 8"><path d="M4.5 0 L0.5 4 L4.5 8Z" fill="#505050"/></svg>
<svg class="a" style="left:1035px;top:505px" width="5" height="8" viewBox="0 0 5 8"><path d="M0.5 0 L4.5 4 L0.5 8Z" fill="#505050"/></svg>
<div class="a" style="left:28px;top:502px;width:766px;height:15px;border:1px solid #a8a8a8;border-radius:2px;background:linear-gradient(#f8f8f8 0%,#ececec 50%,#d8d8d8 51%,#dedede 100%)"></div>
<div class="a" style="left:407px;top:506px;width:6px;height:7px;background:repeating-linear-gradient(90deg,#707070 0 1px,transparent 1px 2.5px)"></div>
<div class="a" style="left:1046px;top:394px;width:18px;height:124px;background:#f0f0f0;border-left:1px solid #e4e4e4"></div>
<svg class="a" style="left:1051px;top:399px" width="8" height="5" viewBox="0 0 8 5"><path d="M0 4.5 L4 0.5 L8 4.5Z" fill="#505050"/></svg>
<svg class="a" style="left:1051px;top:491px" width="8" height="5" viewBox="0 0 8 5"><path d="M0 0.5 L4 4.5 L8 0.5Z" fill="#505050"/></svg>
<div class="a" style="left:1047px;top:411px;width:15px;height:21px;border:1px solid #a0a0a0;border-radius:2px;background:linear-gradient(90deg,#f8f8f8 0%,#ececec 50%,#dadada 51%,#e0e0e0 100%)"></div>
<div class="a" style="left:1051px;top:417px;width:7px;height:8px;background:repeating-linear-gradient(#606060 0 1px,transparent 1px 2.5px)"></div>
<!-- totals -->
<div class="a" style="left:16.0px;top:527px;font-size:13px;line-height:17px;color:#000;">合计金额</div>
<div class="a" style="left:80px;top:525px;width:101px;height:18px;background:#f0f0f0;border-bottom:1px solid #6a6a6a"></div>
<div class="a s" style="left:83.0px;top:526px;color:#000;"><span class="c">1</span><span class="c">7</span><span class="c">7</span><span class="c">2</span><span class="c">.</span><span class="c">5</span><span class="c">8</span><span class="c">5</span></div>
<div class="a" style="left:190.0px;top:527px;font-size:13px;line-height:17px;color:#000;">整单折扣</div>
<div class="a" style="left:256px;top:542px;width:80px;height:1px;background:#6a6a6a"></div>
<div class="a s" style="left:258.0px;top:526px;color:#000;"><span class="c">1</span><span class="c">0</span><span class="c">0</span></div>
<div class="a" style="left:342.0px;top:527px;font-size:13px;line-height:17px;color:#000;">整单优惠</div>
<div class="a" style="left:407px;top:542px;width:76px;height:1px;background:#6a6a6a"></div>
<div class="a s" style="left:408.0px;top:526px;color:#000;"><span class="c">0</span></div>
<svg class="a" style="left:490px;top:530px" width="14" height="14" viewBox="0 0 14 14"><rect x="0.5" y="0.5" width="13" height="13" rx="1.5" fill="#4ab838" stroke="#2a8a20"/><rect x="1" y="1" width="12" height="4" fill="#6ac850" opacity="0.7"/><path d="M3.6 3 L7 6.8 L10.4 3" fill="none" stroke="#fff" stroke-width="2"/><path d="M7 6.5 L7 11.8" stroke="#fff" stroke-width="2"/><path d="M4 8.5 L10 8.5 M4 10.5 L10 10.5" stroke="#fff" stroke-width="1"/></svg>
<div class="a" style="left:515.0px;top:527px;font-size:13px;line-height:17px;color:#000;">应收金额</div>
<div class="a" style="left:580px;top:525px;width:87px;height:18px;background:#f0f0f0;border-bottom:1px solid #6a6a6a"></div>
<div class="a s" style="left:583.0px;top:526px;color:#000;"><span class="c">1</span><span class="c">7</span><span class="c">7</span><span class="c">2</span><span class="c">.</span><span class="c">5</span><span class="c">8</span><span class="c">5</span></div>
<div class="a" style="left:678.0px;top:527px;font-size:13px;line-height:17px;color:#000;">制单人</div>
<div class="a" style="left:729px;top:525px;width:84px;height:18px;background:#f0f0f0;border-bottom:1px solid #9a9a9a"></div>
<div class="a" style="left:731.0px;top:524px;font-size:13px;line-height:17px;color:#9a9a9a;">系统管理员</div>
<div class="a" style="left:822.0px;top:527px;font-size:13px;line-height:17px;color:#000;">制单日期</div>
<div class="a" style="left:889px;top:525px;width:103px;height:18px;background:#f0f0f0;border-bottom:1px solid #9a9a9a"></div>
<div class="a s" style="left:890.0px;top:526px;color:#9a9a9a;"><span class="c">2</span><span class="c">0</span><span class="c">1</span><span class="c">7</span><span class="c">&#8211;</span><span class="c">0</span><span class="c">2</span><span class="c">&#8211;</span><span class="c">2</span><span class="c">4</span></div>
<!-- status bar -->
<div class="a" style="left:8px;top:561px;width:1059px;height:27px;background:linear-gradient(#ffffff 0,#ffffff 1px,#d8d8d8 2px,#f0f0f0 7px,#f0f0f0 100%)"></div>
<svg class="a" style="left:12px;top:568px" width="16" height="16" viewBox="0 0 16 16"><rect x="0" y="0" width="16" height="16" rx="2" fill="#dc2020"/><path d="M2.4 4.2 Q3.6 3.8 4.6 5 Q5.6 7 6.2 9 Q6.8 11 8 11.6 Q6.2 12 5.2 10.6 Q4.2 9 3.6 7 Q3.1 5.2 2.4 4.2Z" fill="#fff"/><path d="M5.6 9.4 Q7 5.6 12.6 3.4 Q10.6 6 9.6 8 Q8.2 8.2 6.6 9.6Z" fill="#fff"/><path d="M4.6 11.6 Q7 14.4 10.4 13.4 Q13.6 12.4 14.2 7.6 Q12.6 10.6 10.4 11.4 Q7.6 12.4 4.6 11.6Z" fill="#fff"/><path d="M8.6 10.6 Q9.2 8.8 11.2 8.8 Q10.2 9.4 10.2 10.8" fill="none" stroke="#fff" stroke-width="0.9"/><circle cx="13.2" cy="2.8" r="0.45" fill="#fff"/><circle cx="13.9" cy="3.8" r="0.4" fill="#fff"/></svg>
<div class="a" style="left:31px;top:568px;font-size:12px;line-height:16px">应用中心：</div><div class="a" style="left:91px;top:567px;font-family:'Liberation Serif',serif;font-size:12.5px;line-height:16px"><span style="display:inline-block;width:5.95px;text-align:center;transform:scaleX(0.8)">1</span><span style="display:inline-block;width:5.95px;text-align:center;transform:scaleX(0.8)">2</span><span style="display:inline-block;width:5.95px;text-align:center;transform:scaleX(0.8)">7</span><span style="display:inline-block;width:5.95px;text-align:center;transform:scaleX(0.8)">.</span><span style="display:inline-block;width:5.95px;text-align:center;transform:scaleX(0.8)">0</span><span style="display:inline-block;width:5.95px;text-align:center;transform:scaleX(0.8)">.</span><span style="display:inline-block;width:5.95px;text-align:center;transform:scaleX(0.8)">0</span><span style="display:inline-block;width:5.95px;text-align:center;transform:scaleX(0.8)">.</span><span style="display:inline-block;width:5.95px;text-align:center;transform:scaleX(0.8)">1</span><span style="display:inline-block;width:5.95px;text-align:center;transform:scaleX(0.8)">:</span><span style="display:inline-block;width:5.95px;text-align:center;transform:scaleX(0.8)">7</span><span style="display:inline-block;width:5.95px;text-align:center;transform:scaleX(0.8)">0</span><span style="display:inline-block;width:5.95px;text-align:center;transform:scaleX(0.8)">9</span><span style="display:inline-block;width:5.95px;text-align:center;transform:scaleX(0.8)">3</span></div>
<svg class="a" style="left:216px;top:568px" width="15" height="15" viewBox="0 0 15 15"><circle cx="7.5" cy="7.5" r="7" fill="#30b030" stroke="#1a8a1a" stroke-width="0.8"/><path d="M3.5 7.5 L6.5 10.5 L11.5 4.5" fill="none" stroke="#fff" stroke-width="2"/></svg>
<div class="a" style="left:234px;top:568px;font-size:12px;line-height:16px">连接状态：正常</div>
<div class="a" style="left:344px;top:568px;font-size:12px;line-height:16px">账套：演示账套</div>
<div class="a" style="left:568px;top:568px;font-size:12px;line-height:16px">操作员：系统管理员</div><div class="a" style="left:676px;top:567px;font-family:'Liberation Serif',serif;font-size:12.5px;line-height:16px"><span style="display:inline-block;width:5.95px;text-align:center;transform:scaleX(0.8)">(</span><span style="display:inline-block;width:5.95px;text-align:center;transform:scaleX(0.8)">a</span><span style="display:inline-block;width:5.95px;text-align:center;transform:scaleX(0.8)">d</span><span style="display:inline-block;width:5.95px;text-align:center;transform:scaleX(0.8)">m</span><span style="display:inline-block;width:5.95px;text-align:center;transform:scaleX(0.8)">i</span><span style="display:inline-block;width:5.95px;text-align:center;transform:scaleX(0.8)">n</span><span style="display:inline-block;width:5.95px;text-align:center;transform:scaleX(0.8)">)</span></div>
<div class="a" style="left:751px;top:568px;font-size:12px;line-height:16px">正式版</div><div class="a" style="left:792px;top:568px;font-size:12px;line-height:16px">授权序列号：</div><div class="a" style="left:864px;top:568px;font-size:11px;line-height:16px">051696989</div>
<div class="a" style="left:207px;top:568px;width:1px;height:17px;background:#c8c8c8;box-shadow:1px 0 0 #fff"></div>
<div class="a" style="left:330px;top:568px;width:1px;height:17px;background:#c8c8c8;box-shadow:1px 0 0 #fff"></div>
<div class="a" style="left:553px;top:568px;width:1px;height:17px;background:#c8c8c8;box-shadow:1px 0 0 #fff"></div>
<div class="a" style="left:736px;top:568px;width:1px;height:17px;background:#c8c8c8;box-shadow:1px 0 0 #fff"></div>
<div class="a" style="left:1045px;top:568px;width:1px;height:17px;background:#c8c8c8;box-shadow:1px 0 0 #fff"></div>
<div class="a" style="left:1056px;top:576px;width:8px;height:8px;background:radial-gradient(circle,#a0a0a0 0.7px,transparent 0.8px) 0 0/3px 3px;clip-path:polygon(100% 0,100% 100%,0 100%)"></div>

<!-- popup menu -->
<div class="a" style="left:618px;top:201px;width:197px;height:220px;border:1px solid #979797;background:#f0f0f0;box-shadow:2px 2px 4px rgba(0,0,0,0.35)"></div>
<div class="a" style="left:644px;top:203px;width:1px;height:216px;background:#e2e3e3;box-shadow:1px 0 0 #fff"></div>
<div class="a" style="left:652px;top:207px;font-size:12px;line-height:16px">打印</div>
<div class="a" style="left:753px;top:207px;font-family:'Liberation Serif',serif;font-weight:bold;font-size:12.5px;line-height:16px"><span style="display:inline-block;width:6.0px;text-align:center;transform:scaleX(0.78)">C</span><span style="display:inline-block;width:6.0px;text-align:center;transform:scaleX(0.78)">t</span><span style="display:inline-block;width:6.0px;text-align:center;transform:scaleX(0.78)">r</span><span style="display:inline-block;width:6.0px;text-align:center;transform:scaleX(0.78)">l</span><span style="display:inline-block;width:6.0px;text-align:center;transform:scaleX(0.78)">+</span><span style="display:inline-block;width:6.0px;text-align:center;transform:scaleX(0.78)">P</span></div>
<div class="a" style="left:652px;top:230px;font-size:12px;line-height:16px">打印预览</div>
<div class="a" style="left:652px;top:253px;font-size:12px;line-height:16px">选择格式打印</div>
<div class="a" style="left:777px;top:253px;font-family:'Liberation Serif',serif;font-weight:bold;font-size:12.5px;line-height:16px"><span style="display:inline-block;width:6.0px;text-align:center;transform:scaleX(0.78)">F</span><span style="display:inline-block;width:6.0px;text-align:center;transform:scaleX(0.78)">7</span></div>
<div class="a" style="left:652px;top:276px;font-size:12px;line-height:16px">查看单据打印记录</div>
<div class="a" style="left:652px;top:302px;font-size:12px;line-height:16px">打印空白送货单</div>
<div class="a" style="left:652px;top:325px;font-size:12px;line-height:16px">特殊打印（简体转繁体）</div>
<div class="a" style="left:652px;top:350px;font-size:12px;line-height:16px">打印格式设计</div>
<div class="a" style="left:652px;top:376px;font-size:12px;line-height:16px">打印快递单</div>
<div class="a" style="left:777px;top:376px;font-family:'Liberation Serif',serif;font-weight:bold;font-size:12.5px;line-height:16px"><span style="display:inline-block;width:6.0px;text-align:center;transform:scaleX(0.78)">F</span><span style="display:inline-block;width:6.0px;text-align:center;transform:scaleX(0.78)">8</span></div>
<div class="a" style="left:652px;top:400px;font-size:12px;line-height:16px">快递单打印格式设计</div>
<div class="a" style="left:646px;top:296px;width:166px;height:1px;background:#e0e0e0;box-shadow:0 1px 0 #fff"></div>
<div class="a" style="left:646px;top:345px;width:166px;height:1px;background:#e0e0e0;box-shadow:0 1px 0 #fff"></div>
<div class="a" style="left:646px;top:371px;width:166px;height:1px;background:#e0e0e0;box-shadow:0 1px 0 #fff"></div>

<!-- red annotations -->
<svg class="a" style="left:0;top:0" width="1075" height="596" viewBox="0 0 1075 596">
<ellipse cx="642.7" cy="180.4" rx="30.3" ry="30.6" fill="none" stroke="#ff2b2b" stroke-width="3"/>
<ellipse cx="682.4" cy="357.5" rx="60.5" ry="15.2" fill="none" stroke="#ff2b2b" stroke-width="3"/>
</svg>
</body></html>
